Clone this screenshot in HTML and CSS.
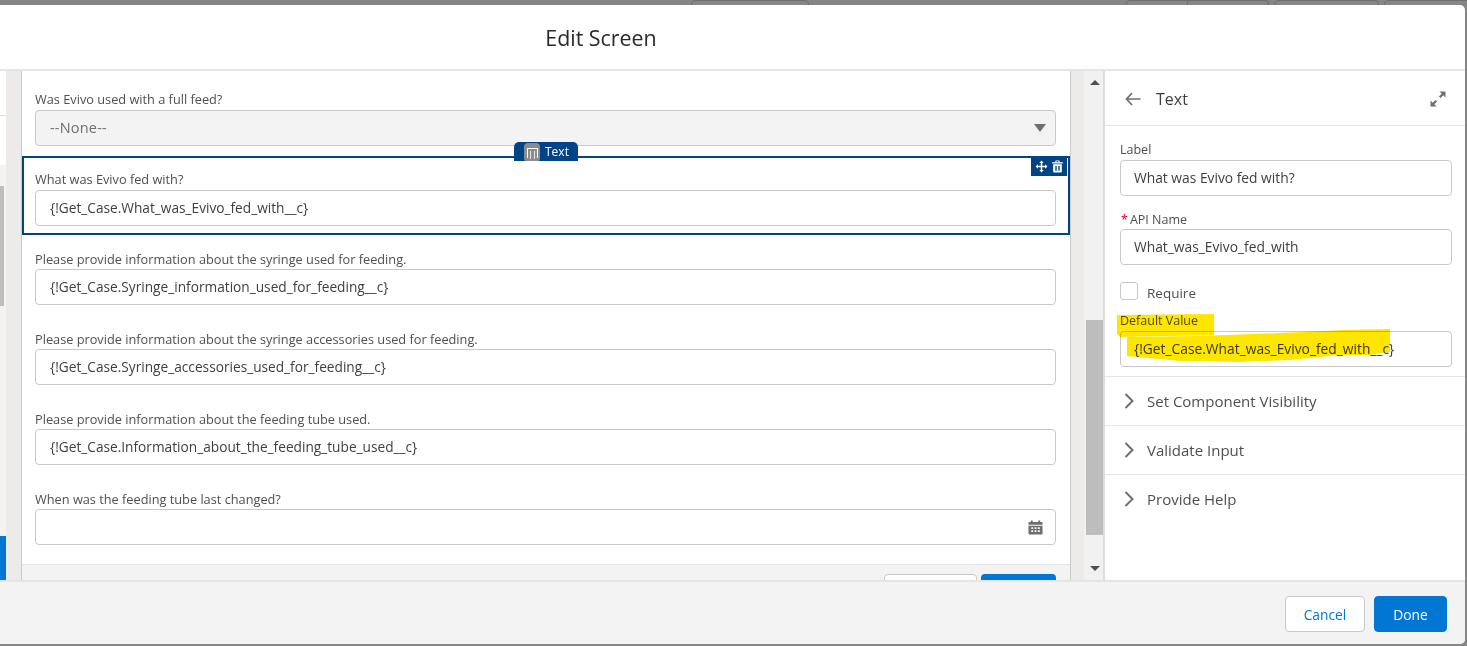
FILE: index.html
```html
<!DOCTYPE html>
<html lang="en">
<head>
  <meta charset="UTF-8" />
  <title>Edit Screen</title>
  <link rel="stylesheet" href="styles.css">
</head>
<body>

  <svg class="sprites" width="0" height="0">
    <symbol id="i-move" viewBox="0 0 24 24"><path d="M12 1l4 4.5h-2.6V10.6h5.1V8l4.5 4-4.5 4v-2.6h-5.100V18.500H16L12 23l-4-4.500h2.600v-5.100H5.500V16L1 12l4.500-4v2.600h5.100V5.500H8z"/></symbol>
    <symbol id="i-trash" viewBox="0 0 24 24"><path d="M9 1h6a1 1 0 0 1 1 1v2h6v2.500H2V4h6V2a1 1 0 0 1 1-1zm1 1.500V4h4V2.500zM4 8h16v13.500a1.500 1.500 0 0 1-1.500 1.500h-13A1.500 1.500 0 0 1 4 21.500zm4 3v9h2.500v-9zm5.500 0v9H16v-9z"/></symbol>
    <symbol id="i-chevron" viewBox="0 0 10 16"><path d="M1.500 1l7 7-7 7" fill="none" stroke="currentColor" stroke-width="2"/></symbol>
  </svg>

  <div class="behind">
    <span class="ghost ghost-a"></span>
    <span class="ghost ghost-b"></span>
    <span class="ghost ghost-c"></span>
    <span class="ghost ghost-d"></span>
    <span class="ghost ghost-e"></span>
  </div>

  <div class="modal">
    <header class="modal-head"><h2>Edit Screen</h2></header>

    <div class="modal-body">
      <div class="strip">
        <div class="strip-top"></div>
        <div class="strip-mid"></div>
        <div class="strip-track"><div class="strip-thumb"></div></div>
        <div class="strip-blue"></div>
      </div>
      <div class="gutter gutter-left"></div>

      <main class="canvas">
        <div class="canvas-scroll">
          <div class="field">
            <div class="field-label">Was Evivo used with a full feed?</div>
            <div class="box box-disabled">
              <span class="none-text">--None--</span>
              <span class="caret"></span>
            </div>
          </div>

          <div class="field field-selected">
            <div class="tag">
              <span class="tag-icon"><span class="tag-glyph"></span></span>
              <span>Text</span>
            </div>
            <div class="actions">
              <svg class="action-icon"><use href="#i-move"/></svg>
              <svg class="action-icon"><use href="#i-trash"/></svg>
            </div>
            <div class="field-label">What was Evivo fed with?</div>
            <div class="box">{!Get_Case.What_was_Evivo_fed_with__c}</div>
          </div>

          <div class="field">
            <div class="field-label">Please provide information about the syringe used for feeding.</div>
            <div class="box">{!Get_Case.Syringe_information_used_for_feeding__c}</div>
          </div>

          <div class="field">
            <div class="field-label">Please provide information about the syringe accessories used for feeding.</div>
            <div class="box">{!Get_Case.Syringe_accessories_used_for_feeding__c}</div>
          </div>

          <div class="field">
            <div class="field-label">Please provide information about the feeding tube used.</div>
            <div class="box">{!Get_Case.Information_about_the_feeding_tube_used__c}</div>
          </div>

          <div class="field">
            <div class="field-label">When was the feeding tube last changed?</div>
            <div class="box box-date">
              <svg class="calendar" viewBox="0 0 16 16">
                <path d="M3 0.500h2V2h6V0.500h2V2h1.500A1 1 0 0 1 15.500 3v2H0.500V3a1 1 0 0 1 1-1H3z"/>
                <path fill-rule="evenodd" d="M0.500 6h15v8.500a1 1 0 0 1-1 1h-13a1 1 0 0 1-1-1zM3.500 7.800v1.700h2V7.800zm3.500 0v1.700h2V7.800zm3.500 0v1.700h2V7.800zM3.500 11v1.700h2V11zM7 11v1.700h2V11zm3.500 0v1.700h2V11z"/>
              </svg>
            </div>
          </div>
        </div>
        <div class="canvas-foot">
          <span class="foot-btn foot-btn-white"></span>
          <span class="foot-btn foot-btn-blue"></span>
        </div>
      </main>

      <div class="gutter gutter-right"></div>
      <div class="scrollbar">
        <span class="arrow-up"></span>
        <div class="scroll-thumb"></div>
        <span class="arrow-down"></span>
      </div>

      <aside class="panel">
        <div class="panel-head">
          <svg class="back-icon" viewBox="0 0 16 14"><path d="M7 1L1.500 7 7 13M1.500 7H15.500" fill="none" stroke="currentColor" stroke-width="1.700"/></svg>
          <span class="panel-title">Text</span>
          <svg class="expand-icon" viewBox="0 0 16 16"><path d="M9.500 0.500H15.500V6.500L13.300 4.300 10.500 7.100 8.900 5.500 11.700 2.700zM6.500 15.500H0.500V9.500L2.700 11.700 5.500 8.900 7.100 10.500 4.300 13.300z"/></svg>
        </div>

        <div class="panel-form">
          <div class="panel-label">Label</div>
          <div class="panel-box">What was Evivo fed with?</div>

          <div class="panel-label panel-label-api"><span class="req">*</span>API Name</div>
          <div class="panel-box">What_was_Evivo_fed_with</div>

          <div class="check-row">
            <span class="check"></span>
            <span class="check-text">Require</span>
          </div>

          <div class="panel-label panel-label-default">Default Value</div>
          <div class="panel-box">{!Get_Case.What_was_Evivo_fed_with__c}</div>
        </div>

        <div class="section">
          <svg class="chev"><use href="#i-chevron"/></svg>
          <span>Set Component Visibility</span>
        </div>
        <div class="section">
          <svg class="chev"><use href="#i-chevron"/></svg>
          <span>Validate Input</span>
        </div>
        <div class="section section-last">
          <svg class="chev"><use href="#i-chevron"/></svg>
          <span>Provide Help</span>
        </div>

        <!-- marker scribbled over the screenshot -->
        <svg class="marker" viewBox="1105 71 360 509">
          <polygon points="1117,315 1214,314 1214,335 1120,337 1117,334"/>
          <polygon points="1127,337 1200,336 1280,333 1345,330 1390,329 1390,352 1370,355 1340,355 1290,360 1240,362 1180,361 1127,356"/>
        </svg>
      </aside>
    </div>

    <footer class="modal-foot">
      <button class="btn btn-cancel">Cancel</button>
      <button class="btn btn-done">Done</button>
    </footer>
  </div>

</body>
</html>
```

FILE: styles.css
```css
* {
  box-sizing: border-box;
}

html, body {
  margin: 0;
  height: 646px;
  overflow: hidden;
}

body {
  background: #868686;
  font-family: "Open Sans", sans-serif;
  color: #3e3e3c;
}

.sprites {
  position: absolute;
}

/* page behind the modal, only a sliver shows */
.behind {
  height: 5px;
  display: flex;
  overflow: hidden;
}

.ghost {
  display: block;
  height: 10px;
  border: 1px solid #6f6f6f;
  border-radius: 4px;
  flex: none;
}

.ghost-a { width: 118px; margin-left: 691px; }
.ghost-b { width: 62px; margin-left: 317px; border-radius: 4px 0 0 4px; }
.ghost-c { width: 81px; border-radius: 0 4px 4px 0; border-left: 0; }
.ghost-d { width: 105px; margin-left: 5px; }
.ghost-e { width: 90px; margin-left: 5px; }

.modal {
  width: 1465px;
  height: 639px;
  background: #fff;
  border-radius: 0 5px 5px 0;
  display: flex;
  flex-direction: column;
  overflow: hidden;
}

.modal-head {
  height: 66px;
  flex: none;
  border-bottom: 2px solid #e5e5e5;
  padding: 19px 263px 0 0;
  text-align: center;
}

.modal-head h2 {
  margin: 0;
  font-size: 21.400px;
  font-weight: 400;
  line-height: 28px;
  color: #2b2826;
}

.modal-body {
  flex: 1;
  min-height: 0;
  display: flex;
  position: relative;
}

/* left rail */
.strip {
  width: 6px;
  flex: none;
  display: flex;
  flex-direction: column;
}

.strip-top {
  height: 45px;
  border-bottom: 1px solid #dddbda;
}

.strip-mid {
  height: 49px;
}

.strip-track {
  flex: 1;
  background: #f3f3f3;
  padding-top: 21px;
}

.strip-thumb {
  width: 4px;
  height: 120px;
  background: #bdbdbd;
}

.strip-blue {
  height: 44px;
  background: #0176d3;
}

.gutter {
  flex: none;
  background: #ecebea;
}

.gutter-left {
  width: 16px;
  border-right: 1px solid #c9c9c9;
}

.gutter-right {
  width: 14px;
  border-left: 1px solid #c9c9c9;
}

/* screen canvas */
.canvas {
  width: 1048px;
  flex: none;
  display: flex;
  flex-direction: column;
}

.canvas-scroll {
  flex: 1;
  min-height: 0;
  padding-top: 5px;
}

.field {
  height: 78px;
  margin-bottom: 2px;
  padding: 11px 12px 6px 11px;
  border: 2px solid transparent;
  position: relative;
}

.field-selected {
  height: 79px;
  margin-bottom: 1px;
  border-color: #014486;
}

.field-label {
  height: 20px;
  margin-bottom: 1px;
  font-size: 12.750px;
  line-height: 21px;
  color: #514f4d;
}

.field-selected ~ .field .field-label {
  margin-bottom: 0;
}

.box {
  height: 36px;
  padding: 0 14px;
  background: #fff;
  border: 1px solid #c9c9c9;
  border-radius: 4px;
  font-size: 13.700px;
  line-height: 34px;
  color: #3e3e3c;
}

.box-disabled {
  background: #f3f3f3;
  color: #706e6b;
  display: flex;
  align-items: center;
  justify-content: space-between;
  padding-right: 9px;
}

.none-text {
  font-size: 14.500px;
  letter-spacing: 0.2px;
}

.caret {
  width: 0;
  height: 0;
  border-left: 6.500px solid transparent;
  border-right: 6.500px solid transparent;
  border-top: 8px solid #706e6b;
}

.box-date {
  display: flex;
  align-items: center;
  justify-content: flex-end;
  padding-right: 12px;
}

.calendar {
  width: 15px;
  height: 15px;
  fill: #706e6b;
}

.tag {
  position: absolute;
  top: -16px;
  left: 490px;
  width: 64px;
  height: 19px;
  padding-left: 10px;
  background: #014486;
  border-radius: 5px 5px 0 0;
  color: #fff;
  font-size: 12px;
  line-height: 20px;
  display: flex;
  gap: 5px;
  overflow: hidden;
}

.tag-icon {
  width: 16px;
  height: 19px;
  margin-top: 1px;
  background: #8c8c8c;
  border-radius: 4px;
  display: flex;
  justify-content: center;
  padding-top: 5px;
}

.tag-glyph {
  width: 11px;
  height: 10px;
  border: 1px solid #fff;
  border-bottom: 0;
  display: flex;
  justify-content: center;
  padding-top: 2px;
}

.tag-glyph::after {
  content: "";
  width: 3px;
  height: 8px;
  border-left: 1px solid #e4e4e4;
  border-right: 1px solid #e4e4e4;
}

.actions {
  position: absolute;
  top: -1px;
  right: 1px;
  width: 36px;
  height: 19px;
  padding-left: 1px;
  background: #014486;
  display: flex;
  align-items: center;
  justify-content: center;
  gap: 3px;
}

.action-icon {
  width: 13px;
  height: 13px;
  fill: #fff;
}

.canvas-foot {
  height: 16px;
  flex: none;
  background: #f3f3f3;
  border-top: 1px solid #e5e5e5;
  padding: 9px 14px 0 0;
  display: flex;
  justify-content: flex-end;
  gap: 4px;
  overflow: hidden;
}

.foot-btn {
  display: block;
  height: 36px;
  border-radius: 4px;
  flex: none;
}

.foot-btn-white {
  width: 93px;
  background: #fff;
  border: 1px solid #c9c9c9;
}

.foot-btn-blue {
  width: 75px;
  background: #0176d3;
}

/* modal scrollbar */
.scrollbar {
  width: 21px;
  flex: none;
  background: #f1f1f1;
  border-right: 2px solid #dcdcdc;
  padding: 9px 0 9px 2px;
  display: flex;
  flex-direction: column;
}

.arrow-up, .arrow-down {
  width: 0;
  height: 0;
  flex: none;
  margin-left: 4px;
  border-left: 5px solid transparent;
  border-right: 5px solid transparent;
}

.arrow-up {
  border-bottom: 5px solid #505050;
}

.arrow-down {
  border-top: 5px solid #505050;
}

.scroll-thumb {
  width: 17px;
  height: 215px;
  margin: 235px 0 31px 0;
  background: #bdbdbd;
}

/* properties panel */
.panel {
  width: 360px;
  flex: none;
  background: #fff;
  position: relative;
}

.panel-head {
  height: 55px;
  border-bottom: 1px solid #e5e5e5;
  padding: 2px 19px 0 20px;
  display: flex;
  align-items: center;
}

.back-icon {
  width: 16px;
  height: 14px;
  color: #706e6b;
  margin-right: 15px;
}

.panel-title {
  flex: 1;
  font-size: 16px;
  color: #3e3e3c;
}

.expand-icon {
  width: 16px;
  height: 16px;
  fill: #706e6b;
}

.panel-form {
  height: 251px;
  padding: 13px 13px 0 15px;
  border-bottom: 1px solid #e5e5e5;
}

.panel-label {
  height: 21px;
  font-size: 12.500px;
  line-height: 21px;
  color: #514f4d;
}

.panel-label-api {
  margin-top: 13px;
  height: 20px;
}

.req {
  color: #ea001e;
  margin: 0 2px 0 1px;
}

.panel-box {
  height: 36px;
  padding: 0 13px;
  border: 1px solid #c9c9c9;
  border-radius: 4px;
  font-size: 13.800px;
  line-height: 34px;
  color: #3e3e3c;
}

.check-row {
  height: 18px;
  margin: 17px 0 10px;
  display: flex;
  align-items: center;
  gap: 9px;
  font-size: 13.500px;
  color: #514f4d;
}

.check {
  width: 18px;
  height: 18px;
  border: 1px solid #c9c9c9;
  border-radius: 3px;
}

.check-text {
  padding-top: 3px;
}

.section {
  height: 49px;
  padding-left: 19px;
  border-bottom: 1px solid #e5e5e5;
  display: flex;
  align-items: center;
  gap: 13px;
  font-size: 15px;
  color: #514f4d;
}

.section-last {
  height: 48px;
  border-bottom: 0;
}

.chev {
  width: 10px;
  height: 16px;
  color: #706e6b;
}

.marker {
  position: absolute;
  top: 0;
  left: 0;
  width: 360px;
  height: 509px;
  fill: #ffe600;
  mix-blend-mode: multiply;
  pointer-events: none;
}

.modal-foot {
  height: 64px;
  flex: none;
  background: #f3f3f3;
  border-top: 2px solid #e5e5e5;
  padding: 14px 18px 0 0;
  display: flex;
  justify-content: flex-end;
  gap: 9px;
}

.btn {
  height: 36px;
  border-radius: 4px;
  font-family: inherit;
  font-size: 13.800px;
  padding: 0;
}

.btn-cancel {
  width: 80px;
  background: #fff;
  border: 1px solid #c9c9c9;
  color: #0176d3;
}

.btn-done {
  width: 73px;
  background: #0176d3;
  border: 1px solid #0176d3;
  color: #fff;
}
```
